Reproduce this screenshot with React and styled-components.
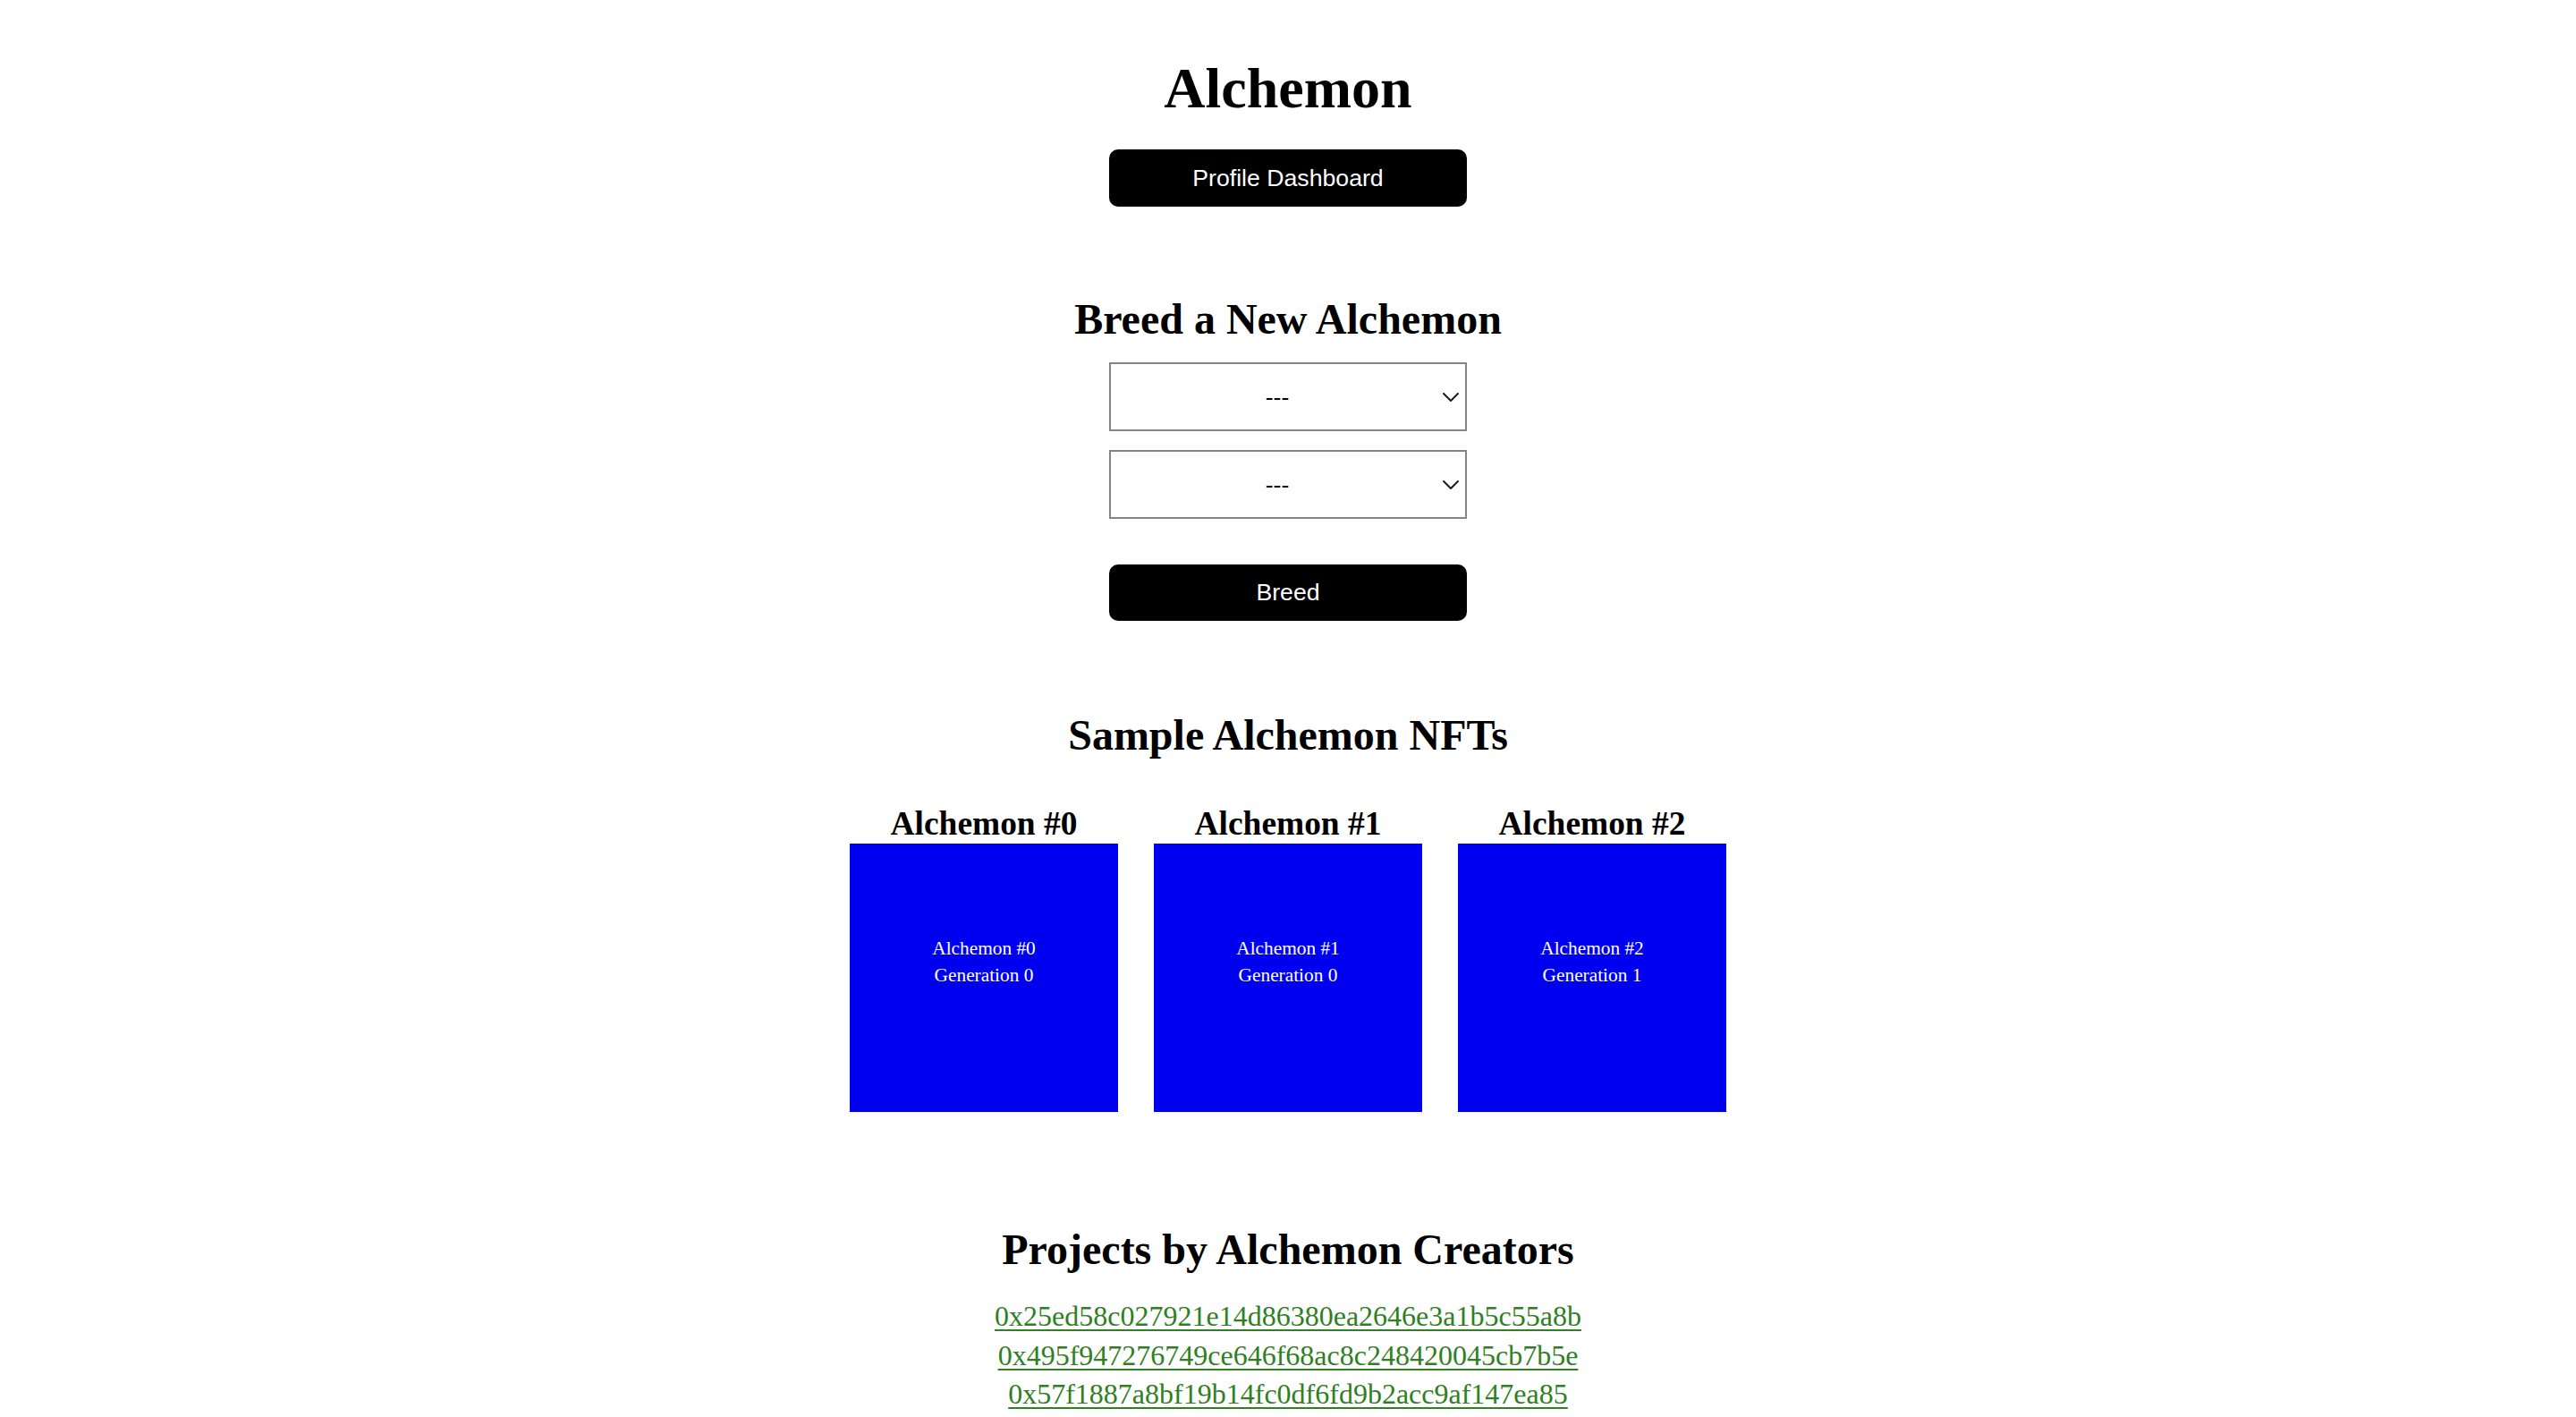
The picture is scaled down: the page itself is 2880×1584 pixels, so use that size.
import React from "react";
import styled, { createGlobalStyle } from "styled-components";

const GlobalStyle = createGlobalStyle`
  html, body {
    margin: 0;
    padding: 0;
    background: #ffffff;
  }
  body {
    font-family: "Liberation Serif", "Times New Roman", serif;
    color: #000;
  }
`;

const Page = styled.main`
  display: flex;
  flex-direction: column;
  align-items: center;
  padding-top: 63px;
  padding-bottom: 40px;
`;

const Title = styled.h1`
  margin: 0;
  font-family: "Liberation Serif", "Times New Roman", serif;
  font-weight: 700;
  font-size: 64px;
  line-height: 72px;
  text-align: center;
`;

const SectionTitle = styled.h2`
  margin: ${(p) => p.$top}px 0 0;
  font-family: "Liberation Serif", "Times New Roman", serif;
  font-weight: 700;
  font-size: 48px;
  line-height: 56px;
  text-align: center;
`;

const BlackButton = styled.button`
  display: block;
  width: 400px;
  height: ${(p) => p.$h || 64}px;
  margin-top: ${(p) => p.$top}px;
  padding: 0;
  border: none;
  border-radius: 10px;
  background: #000;
  color: #fff;
  font-family: "Liberation Sans", Arial, Helvetica, sans-serif;
  font-size: 26.67px;
  line-height: 1;
  cursor: pointer;
`;

const BreedForm = styled.div`
  display: flex;
  flex-direction: column;
  align-items: center;
  gap: 21px;
  margin-top: 20px;
`;

const SelectWrap = styled.div`
  position: relative;
  width: 400px;
  height: 77px;
`;

const Select = styled.select`
  appearance: none;
  -webkit-appearance: none;
  box-sizing: border-box;
  width: 100%;
  height: 100%;
  margin: 0;
  padding: 0 24px 0 0;
  border: 2px solid #858585;
  border-radius: 0;
  background: #fff;
  color: #000;
  font-family: "Liberation Sans", Arial, Helvetica, sans-serif;
  font-size: 26.67px;
  text-align: center;
  text-align-last: center;
  outline: none;
`;

const Chevron = styled.svg`
  position: absolute;
  right: 8px;
  top: 50%;
  width: 20px;
  height: 12px;
  margin-top: -6px;
  pointer-events: none;
`;

const CardRow = styled.div`
  display: flex;
  gap: 40px;
  margin-top: 49px;
`;

const Card = styled.div`
  display: flex;
  flex-direction: column;
  align-items: center;
  width: 300px;
`;

const CardTitle = styled.h3`
  margin: 0;
  font-family: "Liberation Serif", "Times New Roman", serif;
  font-weight: 700;
  font-size: 37.44px;
  line-height: 44px;
  text-align: center;
  white-space: nowrap;
`;

const NftImage = styled.div`
  box-sizing: border-box;
  width: 300px;
  height: 300px;
  padding-top: 102px;
  background: #0000f0;
  color: #fff;
  font-family: "Liberation Serif", "Times New Roman", serif;
  font-size: 21.33px;
  line-height: 30px;
  text-align: center;
`;

const LinkList = styled.div`
  display: flex;
  flex-direction: column;
  align-items: center;
  margin-top: 25px;
`;

const CreatorLink = styled.a`
  font-family: "Liberation Serif", "Times New Roman", serif;
  font-size: 32px;
  line-height: 43.5px;
  color: #2f7f23;
  text-decoration: underline;
  text-decoration-thickness: 2px;
  text-underline-offset: 4px;
`;

const nfts = [
  { id: 0, gen: 0 },
  { id: 1, gen: 0 },
  { id: 2, gen: 1 },
];

const creators = [
  "0x25ed58c027921e14d86380ea2646e3a1b5c55a8b",
  "0x495f947276749ce646f68ac8c248420045cb7b5e",
  "0x57f1887a8bf19b14fc0df6fd9b2acc9af147ea85",
];

function ParentSelect() {
  return (
    <SelectWrap>
      <Select defaultValue="">
        <option value="">---</option>
      </Select>
      <Chevron viewBox="0 0 20 12" fill="none">
        <path d="M2 2 L10 10 L18 2" stroke="#1a1a1a" strokeWidth="2" strokeLinecap="round" strokeLinejoin="round" />
      </Chevron>
    </SelectWrap>
  );
}

export default function App() {
  return (
    <>
      <GlobalStyle />
      <Page>
        <Title>Alchemon</Title>
        <BlackButton $top={32}>Profile Dashboard</BlackButton>

        <SectionTitle $top={98}>Breed a New Alchemon</SectionTitle>
        <BreedForm>
          <ParentSelect />
          <ParentSelect />
        </BreedForm>
        <BlackButton $top={51} $h={63}>Breed</BlackButton>

        <SectionTitle $top={100}>Sample Alchemon NFTs</SectionTitle>
        <CardRow>
          {nfts.map((n) => (
            <Card key={n.id}>
              <CardTitle>Alchemon #{n.id}</CardTitle>
              <NftImage>
                <div>Alchemon #{n.id}</div>
                <div>Generation {n.gen}</div>
              </NftImage>
            </Card>
          ))}
        </CardRow>

        <SectionTitle $top={126}>Projects by Alchemon Creators</SectionTitle>
        <LinkList>
          {creators.map((c) => (
            <CreatorLink key={c} href="#">
              {c}
            </CreatorLink>
          ))}
        </LinkList>
      </Page>
    </>
  );
}
